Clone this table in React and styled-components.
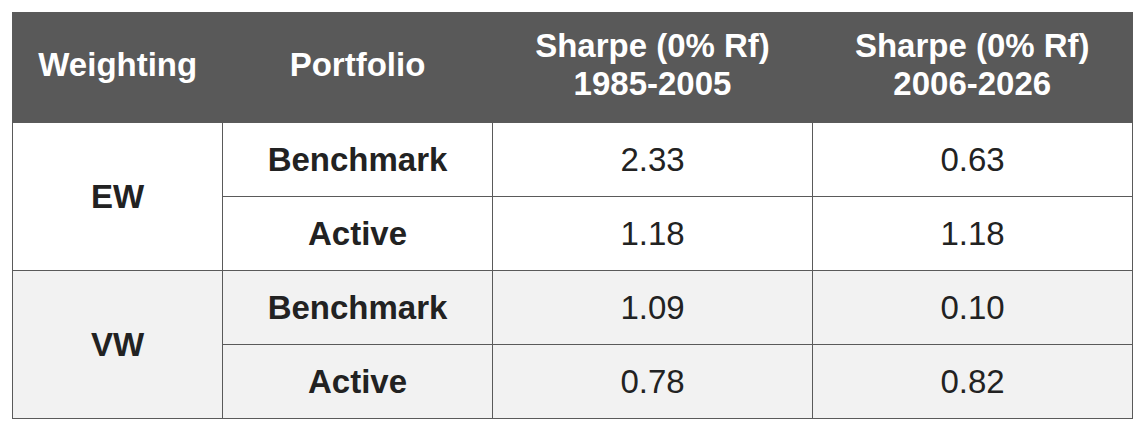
import React from "react";
import styled, { createGlobalStyle } from "styled-components";

const GlobalStyle = createGlobalStyle`
  html, body {
    margin: 0;
    padding: 0;
    background: #fff;
    font-family: "Liberation Sans", Arial, sans-serif;
  }
`;

const groups = [
  {
    weighting: "EW",
    shade: false,
    rows: [
      { portfolio: "Benchmark", early: "2.33", late: "0.63" },
      { portfolio: "Active", early: "1.18", late: "1.18" },
    ],
  },
  {
    weighting: "VW",
    shade: true,
    rows: [
      { portfolio: "Benchmark", early: "1.09", late: "0.10" },
      { portfolio: "Active", early: "0.78", late: "0.82" },
    ],
  },
];

const App = () => {
  return (
    <Page>
      <GlobalStyle />
      <Table>
        <colgroup>
          <col style={{ width: 210 }} />
          <col style={{ width: 270 }} />
          <col style={{ width: 320 }} />
          <col style={{ width: 320 }} />
        </colgroup>
        <thead>
          <HeadRow>
            <HeadCell>Weighting</HeadCell>
            <HeadCell>Portfolio</HeadCell>
            <HeadCell>
              Sharpe (0% Rf)
              <br />
              1985-2005
            </HeadCell>
            <HeadCell>
              Sharpe (0% Rf)
              <br />
              2006-2026
            </HeadCell>
          </HeadRow>
        </thead>
        <tbody>
          {groups.map((group) =>
            group.rows.map((row, i) => (
              <BodyRow key={group.weighting + row.portfolio} $shade={group.shade}>
                {i === 0 && (
                  <Cell rowSpan={group.rows.length} $bold>
                    {group.weighting}
                  </Cell>
                )}
                <Cell $bold>{row.portfolio}</Cell>
                <Cell>{row.early}</Cell>
                <Cell>{row.late}</Cell>
              </BodyRow>
            ))
          )}
        </tbody>
      </Table>
    </Page>
  );
};

const Page = styled.div`
  padding: 12px;
`;

const Table = styled.table`
  width: 1121px;
  table-layout: fixed;
  border-collapse: collapse;
  border: 1px solid #5a5a5a;
  font-size: 33px;
  color: #222;
`;

const HeadRow = styled.tr`
  height: 110px;
  background: #595959;
`;

const HeadCell = styled.th`
  padding: 0 0 5px;
  color: #fff;
  font-weight: bold;
  line-height: 38px;
  text-align: center;
  vertical-align: middle;
`;

const BodyRow = styled.tr`
  height: 74px;
  background: ${(p) => (p.$shade ? "#f2f2f2" : "#fff")};
`;

const Cell = styled.td`
  padding: 0;
  border: 1px solid #5a5a5a;
  text-align: center;
  vertical-align: middle;
  font-weight: ${(p) => (p.$bold ? "bold" : "normal")};
`;

export default App;
